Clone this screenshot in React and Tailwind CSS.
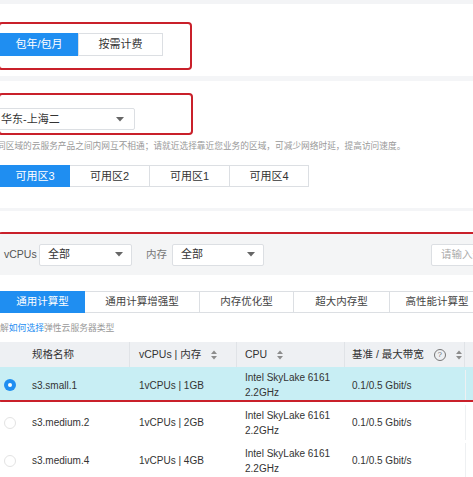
import React from "react";

const BLUE = "bg-[#1f8ef1]";

const Caret = () => (
  <svg width="8" height="5" viewBox="0 0 8 5" className="shrink-0">
    <path d="M0 0 L8 0 L4 4.5 Z" fill="#666" />
  </svg>
);

const SortIcon = () => (
  <svg width="6" height="10" viewBox="0 0 6 10" className="shrink-0">
    <path d="M0 4 L3 0.5 L6 4 Z" fill="#8c8c8c" />
    <path d="M0 6 L3 9.5 L6 6 Z" fill="#8c8c8c" />
  </svg>
);

const HelpIcon = () => (
  <span className="w-[12px] h-[12px] rounded-full border border-[#777] text-[#777] text-[8px] leading-none flex items-center justify-center">
    ?
  </span>
);

const Radio = ({ checked }) =>
  checked ? (
    <span className="w-[12px] h-[12px] rounded-full bg-[#1f8ef1] flex items-center justify-center">
      <span className="w-[4px] h-[4px] rounded-full bg-white" />
    </span>
  ) : (
    <span className="w-[12px] h-[12px] rounded-full border border-[#e3e3e3] bg-white" />
  );

const Select = ({ value, className = "", textPad = "pl-[8px]", caretPad = "pr-[7px]" }) => (
  <div
    className={`h-[22px] shrink-0 bg-white border border-[#dcdfe3] rounded-[2px] flex items-center justify-between ${textPad} ${caretPad} ${className}`}
  >
    <span className="text-[11px] text-[#333]">{value}</span>
    <Caret />
  </div>
);

const zones = ["可用区3", "可用区2", "可用区1", "可用区4"];
const zoneWidths = ["w-[70px]", "w-[80px]", "w-[80px]", "w-[79px]"];

const types = [
  { label: "通用计算型", w: "w-[85px]" },
  { label: "通用计算增强型", w: "w-[115px]" },
  { label: "内存优化型", w: "w-[94px]" },
  { label: "超大内存型", w: "w-[96px]" },
  { label: "高性能计算型", w: "w-[95px]" },
];

const rows = [
  { name: "s3.small.1", mem: "1vCPUs | 1GB", checked: true },
  { name: "s3.medium.2", mem: "1vCPUs | 2GB" },
  { name: "s3.medium.4", mem: "1vCPUs | 4GB" },
];

const Row = ({ row, h, bg }) => (
  <div className={`flex items-center ${h} ${bg} pt-[3px] text-[10px] text-[#333]`}>
    <div className="w-[130px] flex items-center">
      <div className="w-[32px] pl-[4px] flex items-center">
        <Radio checked={row.checked} />
      </div>
      <span>{row.name}</span>
    </div>
    <div className="w-[107px] pl-[9px]">{row.mem}</div>
    <div className="w-[108px] pl-[8px] leading-[15px]">
      <div>Intel SkyLake 6161</div>
      <div>2.2GHz</div>
    </div>
    <div className="w-[120px] pl-[7px]">0.1/0.5 Gbit/s</div>
    <div className="flex-1 h-full border-l border-[#eef0f2]" />
  </div>
);

export default function App() {
  return (
    <div className="w-[473px] h-[477px] overflow-hidden bg-white font-['Liberation_Sans','Noto_Sans_CJK_SC',sans-serif]">
      <div className="h-[4px] bg-[#f3f4f6]" />

      {/* billing mode */}
      <div className="mt-[18px] ml-[-2px] w-[194px] h-[48px] border-2 border-[#c9202a] rounded-[4px] pt-[9px]">
        <div className="flex h-[23px] text-[11px]">
          <div className={`w-[78px] ${BLUE} text-white flex items-center justify-center`}>包年/包月</div>
          <div className="w-[85px] border border-[#dcdfe3] text-[#333] flex items-center justify-center">按需计费</div>
        </div>
      </div>

      <div className="mt-[6px] h-[5px] bg-[#f4f5f7]" />

      {/* region */}
      <div className="mt-[12px] ml-[-2px] w-[195px] h-[42px] border-2 border-[#c9202a] rounded-[4px] pt-[13px]">
        <Select value="华东-上海二" className="w-[150px] ml-[-15px]" textPad="pl-[15px]" caretPad="pr-[10px]" />
      </div>

      <div className="mt-[5px] ml-[-3px] text-[8.7px] leading-[12px] text-[#999] whitespace-nowrap">
        同区域的云服务产品之间内网互不相通；请就近选择靠近您业务的区域，可减少网络时延，提高访问速度。
      </div>

      <div className="mt-[13px] flex h-[22px] text-[11px]">
        {zones.map((z, i) => (
          <div
            key={z}
            className={`${zoneWidths[i]} flex items-center justify-center ${
              i === 0 ? `${BLUE} text-white` : "border border-l-0 border-[#dcdfe3] text-[#333]"
            }`}
          >
            {z}
          </div>
        ))}
      </div>

      <div className="mt-[21px] h-[3px] bg-[#f4f5f7]" />

      {/* spec selection */}
      <div className="mt-[21px] ml-[-2px] w-[500px] border-2 border-[#c9202a] rounded-[4px]">
        <div className="h-[41px] bg-[#f4f5f6] flex items-center pl-[4px]">
          <span className="text-[10.5px] text-[#555] w-[35px] shrink-0">vCPUs</span>
          <Select value="全部" className="w-[93px]" caretPad="pr-[8px]" />
          <span className="text-[10.5px] text-[#777] ml-[14px] w-[26px] shrink-0">内存</span>
          <Select value="全部" className="w-[92px]" caretPad="pr-[8px]" />
          <div className="ml-[167px] h-[22px] w-[80px] shrink-0 bg-white border border-[#dcdfe3] rounded-[2px] flex items-center pl-[9px] overflow-hidden">
            <span className="text-[10.5px] text-[#aaa] whitespace-nowrap">请输入规格名称</span>
          </div>
        </div>

        <div className="mt-[16px] flex h-[22px] text-[10.5px]">
          {types.map((t, i) => (
            <div
              key={t.label}
              className={`${t.w} flex items-center justify-center shrink-0 ${
                i === 0 ? `${BLUE} text-white` : "border border-l-0 border-[#dcdfe3] text-[#444]"
              }`}
            >
              {t.label}
            </div>
          ))}
        </div>

        <div className="mt-[9px] text-[8.8px] leading-[12px] text-[#999] whitespace-nowrap">
          解<span className="text-[#1f8ef1]">如何选择</span>弹性云服务器类型
        </div>

        <div className="mt-[8px] h-[25px] bg-[#eef0f3] flex items-center text-[10.5px] text-[#333]">
          <div className="w-[130px] pl-[32px] h-full flex items-center border-r border-[#e0e3e7]">规格名称</div>
          <div className="w-[107px] pl-[9px] h-full flex items-center gap-[10px] border-r border-[#e0e3e7]">
            <span>vCPUs | 内存</span>
            <SortIcon />
          </div>
          <div className="w-[108px] pl-[8px] h-full flex items-center gap-[10px] border-r border-[#e0e3e7]">
            <span>CPU</span>
            <SortIcon />
          </div>
          <div className="w-[120px] pl-[7px] h-full flex items-center border-r border-[#e0e3e7]">
            <span>基准 / 最大带宽</span>
            <span className="ml-[10px]">
              <HelpIcon />
            </span>
            <span className="ml-[10px]">
              <SortIcon />
            </span>
          </div>
        </div>

        <Row row={rows[0]} h="h-[33px]" bg="bg-[#c8eef4]" />
      </div>

      <Row row={rows[1]} h="h-[38px]" bg="bg-white" />
      <Row row={rows[2]} h="h-[38px]" bg="bg-white" />
    </div>
  );
}
